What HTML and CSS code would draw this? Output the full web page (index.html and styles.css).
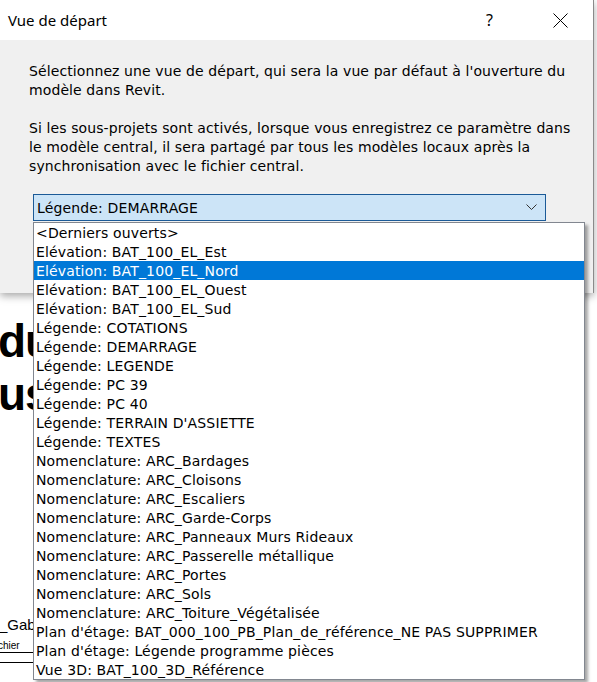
FILE: index.html
```html
<!DOCTYPE html>
<html lang="fr">
<head>
<meta charset="utf-8">
<title>Vue de départ</title>
<link rel="stylesheet" href="styles.css">
</head>
<body>
<div class="canvas">
  <div class="bg-word bg-du">du</div>
  <div class="bg-word bg-us">us</div>
  <div class="bg-gab">_Gab</div>
  <div class="bg-chier">chier</div>
  <div class="bg-line"></div>
</div>

<div class="dialog">
  <div class="titlebar">
    <span class="title">Vue de départ</span>
    <span class="help">?</span>
    <svg class="close" width="15" height="15" viewBox="0 0 15 15"><path d="M0.5 0.5 L14.5 14.5 M14.5 0.5 L0.5 14.5" stroke="#000" stroke-width="1" fill="none"/></svg>
  </div>
  <div class="body">
    <p class="para">Sélectionnez une vue de départ, qui sera la vue par défaut à l'ouverture du modèle dans Revit.</p>
    <p class="para">Si les sous-projets sont activés, lorsque vous enregistrez ce paramètre dans le modèle central, il sera partagé par tous les modèles locaux après la synchronisation avec le fichier central.</p>
    <div class="combo">
      <span class="combo-text">Légende: DEMARRAGE</span>
      <svg class="chevron" width="11" height="7" viewBox="0 0 11 7"><path d="M0.5 0.5 L5.5 5.5 L10.5 0.5" stroke="#333" stroke-width="1" fill="none"/></svg>
    </div>
  </div>
</div>

<ul class="list">
  <li>&lt;Derniers ouverts&gt;</li>
  <li>Elévation: BAT_100_EL_Est</li>
  <li class="sel">Elévation: BAT_100_EL_Nord</li>
  <li>Elévation: BAT_100_EL_Ouest</li>
  <li>Elévation: BAT_100_EL_Sud</li>
  <li>Légende: COTATIONS</li>
  <li>Légende: DEMARRAGE</li>
  <li>Légende: LEGENDE</li>
  <li>Légende: PC 39</li>
  <li>Légende: PC 40</li>
  <li>Légende: TERRAIN D'ASSIETTE</li>
  <li>Légende: TEXTES</li>
  <li>Nomenclature: ARC_Bardages</li>
  <li>Nomenclature: ARC_Cloisons</li>
  <li>Nomenclature: ARC_Escaliers</li>
  <li>Nomenclature: ARC_Garde-Corps</li>
  <li>Nomenclature: ARC_Panneaux Murs Rideaux</li>
  <li>Nomenclature: ARC_Passerelle métallique</li>
  <li>Nomenclature: ARC_Portes</li>
  <li>Nomenclature: ARC_Sols</li>
  <li>Nomenclature: ARC_Toiture_Végétalisée</li>
  <li>Plan d'étage: BAT_000_100_PB_Plan_de_référence_NE PAS SUPPRIMER</li>
  <li>Plan d'étage: Légende programme pièces</li>
  <li>Vue 3D: BAT_100_3D_Référence</li>
</ul>
</body>
</html>
```

FILE: styles.css
```css
html, body {
  margin: 0;
  padding: 0;
  background: #ffffff;
  width: 597px;
  height: 682px;
  overflow: hidden;
  position: relative;
}

.canvas {
  position: absolute;
  left: 0;
  top: 0;
  width: 597px;
  height: 682px;
  font-family: "Liberation Sans", Arial, sans-serif;
  color: #000;
}

.bg-word {
  position: absolute;
  font-weight: bold;
  font-size: 46px;
  line-height: 1;
  letter-spacing: -1px;
}
.bg-du { left: -2px; top: 318px; }
.bg-us { left: -2px; top: 371px; }

.bg-gab {
  position: absolute;
  left: -1px;
  top: 616px;
  font-size: 15px;
}
.bg-chier {
  position: absolute;
  left: -2px;
  top: 640px;
  font-size: 10px;
  width: 36px;
  border-bottom: 1px solid #000;
  line-height: 12px;
}
.bg-line {
  position: absolute;
  left: 0;
  top: 662px;
  width: 34px;
  border-top: 1px solid #000;
}

.dialog {
  position: absolute;
  left: 0;
  top: 0;
  width: 593px;
  height: 293px;
  background: #f0f0f0;
  border-right: 1px solid #8a8a8a;
  box-shadow: 0 3px 8px rgba(0,0,0,0.35);
  font-family: "DejaVu Sans", sans-serif;
}

.titlebar {
  height: 40px;
  background: #ffffff;
  display: flex;
  align-items: center;
  position: relative;
}
.title {
  font-family: "Noto Sans", "Open Sans", sans-serif;
  font-size: 15px;
  margin-left: 8px;
  color: #000;
  flex: 1;
}
.help {
  font-family: "Noto Sans", "Open Sans", sans-serif;
  font-size: 16px;
  color: #000;
  margin-right: 60px;
}
.close {
  margin-right: 25px;
}

.body {
  padding: 22px 0 0 29px;
}
.para {
  margin: 0 0 19px 0;
  font-size: 14px;
  line-height: 19px;
  letter-spacing: 0.1px;
  color: #000;
  width: 545px;
}
.para + .para {
  margin-bottom: 18px;
}

.combo {
  margin-left: 4px;
  width: 511px;
  height: 25px;
  border: 1px solid #1b5a97;
  background: #cce4f7;
  display: flex;
  align-items: center;
  justify-content: space-between;
}
.combo-text {
  font-size: 14px;
  letter-spacing: 0.15px;
  margin-left: 3px;
  color: #000;
}
.chevron {
  margin-right: 8px;
}

.list {
  position: absolute;
  left: 33px;
  top: 222px;
  width: 550px;
  margin: 0;
  padding: 0;
  list-style: none;
  background: #fff;
  border: 1px solid #828790;
  box-shadow: 3px 3px 3px rgba(0,0,0,0.35);
  font-family: "DejaVu Sans", sans-serif;
  font-size: 14px;
  letter-spacing: 0.15px;
}
.list li {
  height: 19px;
  line-height: 20px;
  padding-left: 2px;
  color: #000;
  white-space: nowrap;
}
.list li.sel {
  background: #0078d7;
  color: #fff;
}
```
